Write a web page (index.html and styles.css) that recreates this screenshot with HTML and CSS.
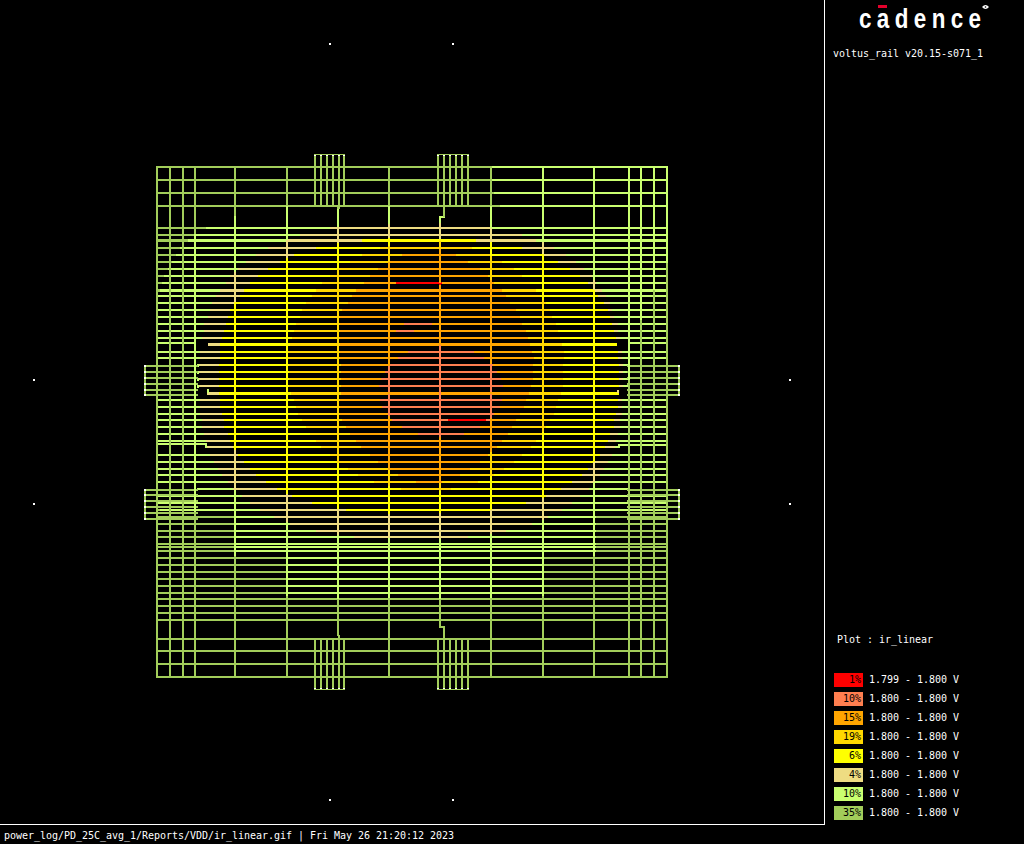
FILE: index.html
```html
<!DOCTYPE html>
<html lang="en">
<head>
    <meta charset="UTF-8">
    <meta name="viewport" content="width=device-width, initial-scale=1.0">
    <title>ir_linear</title>
    <link rel="stylesheet" href="styles.css">
</head>
<body>

<div class="left">
    <div class="plot">
        <svg id="grid" class="grid" width="824" height="824" viewBox="0 0 824 824" shape-rendering="crispEdges"></svg>
    </div>
    <div class="footer">power_log/PD_25C_avg_1/Reports/VDD/ir_linear.gif | Fri May 26 21:20:12 2023</div>
</div>

<div class="side">
    <div class="logo">
        <span class="logo-text">cadence</span>
        <span class="logo-bar"></span>
        <svg class="logo-eye" width="7" height="6" viewBox="0 0 7 6">
            <path d="M0 3 Q3.5 -1 7 3 Q3.5 7 0 3Z" fill="#fff"/>
            <circle cx="3.5" cy="3" r="0.8" fill="#000"/>
        </svg>
    </div>
    <div class="version">voltus_rail v20.15-s071_1</div>

    <div class="plot-name">Plot : ir_linear</div>
    <div class="legend">
        <div class="row"><span class="swatch c-red">1%</span>1.799 - 1.800 V</div>
        <div class="row"><span class="swatch c-coral">10%</span>1.800 - 1.800 V</div>
        <div class="row"><span class="swatch c-orange">15%</span>1.800 - 1.800 V</div>
        <div class="row"><span class="swatch c-gold">19%</span>1.800 - 1.800 V</div>
        <div class="row"><span class="swatch c-yellow">6%</span>1.800 - 1.800 V</div>
        <div class="row"><span class="swatch c-tan">4%</span>1.800 - 1.800 V</div>
        <div class="row"><span class="swatch c-lime">10%</span>1.800 - 1.800 V</div>
        <div class="row"><span class="swatch c-green">35%</span>1.800 - 1.800 V</div>
    </div>
</div>

<script src="plot.js"></script>

</body>
</html>
```

FILE: styles.css
```css
body {
    margin: 0;
    width: 1024px;
    height: 844px;
    display: flex;
    background-color: #000;
    color: #fff;
    font-family: 'DejaVu Sans Mono', monospace;
    font-size: 10px;
    letter-spacing: -0.02px;
    overflow: hidden;
}

.left {
    width: 825px;
    display: flex;
    flex-direction: column;
}

.plot {
    height: 824px;
    border-right: 1px solid #fff;
}

.grid {
    display: block;
}

.footer {
    border-top: 1px solid #fff;
    height: 19px;
    line-height: 21px;
    padding-left: 4px;
    white-space: pre;
}

.side {
    flex: 1;
    display: flex;
    flex-direction: column;
    padding-left: 8px;
}

.logo {
    position: relative;
    height: 48px;
}

.logo-text {
    position: absolute;
    left: 26px;
    top: 2px;
    font-family: 'Liberation Sans', sans-serif;
    font-size: 28px;
    line-height: 34px;
    font-weight: bold;
    letter-spacing: 6.75px;
    transform: scaleX(0.8);
    transform-origin: left top;
}

.logo-bar {
    position: absolute;
    left: 45px;
    top: 5px;
    width: 9px;
    height: 3px;
    background-color: #e4002b;
}

.logo-eye {
    position: absolute;
    left: 149px;
    top: 4px;
}

.version {
    line-height: 12px;
}

.plot-name {
    margin-top: auto;
    padding-left: 4px;
    line-height: 12px;
    margin-bottom: 24px;
}

.legend {
    padding-bottom: 22px;
}

.row {
    display: flex;
    align-items: center;
    height: 19px;
    white-space: pre;
}

.swatch {
    width: 27px;
    height: 14px;
    line-height: 14px;
    padding-right: 2px;
    margin-left: 1px;
    margin-right: 6px;
    text-align: right;
    color: #000;
}

.c-red { background-color: #ff0000; }
.c-coral { background-color: #ff7f50; }
.c-orange { background-color: #ffa500; }
.c-gold { background-color: #ffd700; }
.c-yellow { background-color: #ffff00; }
.c-tan { background-color: #eedc82; }
.c-lime { background-color: #caff70; }
.c-green { background-color: #a2cd5a; }
```

FILE: plot.js
```js
const RED = '#ff0000', CORAL = '#ff7f50', ORANGE = '#ffa500', GOLD = '#ffd700';
const YELLOW = '#ffff00', TAN = '#eedc82', LIME = '#caff70', GREEN = '#a2cd5a';

const svg = document.getElementById('grid');
let out = '';

function rect(x, y, w, h, color) {
    out += `<rect x="${x}" y="${y}" width="${w}" height="${h}" fill="${color}"/>`;
}

function inside(x, y, cx, cy, rx, ry, p) {
    return Math.pow(Math.abs(x - cx) / rx, p) + Math.pow(Math.abs(y - cy) / ry, p) < 1;
}

// lime patch, cut off by hand where the plot goes green
function isLime(x, y) {
    if (inside(x, y, 680, 170, 190, 115, 2)) return true;
    if (y < 206) return false;
    if (y > 510 && (x < 234 || x > 594)) return false;
    if (y > 555 && (x < 286 || x > 543)) return false;
    return inside(x, y, 420, 400, 268, 198, 4);
}

// voltage drop contours, rough shapes read off the plot
function heat(x, y) {
    if (y >= 282 && y <= 284 && x >= 396 && x <= 441) return RED;
    if (y >= 419 && y <= 422 && x >= 448 && x <= 484) return RED;
    if (y >= 323 && y <= 325 && x >= 403 && x <= 431) return CORAL;
    if (y >= 330 && y <= 332 && x >= 396 && x <= 412) return CORAL;
    if (y !== 343 && y !== 392 && inside(x, y, 440, 390, 62, 46, 2)) return CORAL;
    if (inside(x, y, 428, 365, 105, 118, 1.7)) return x < 340 ? GOLD : ORANGE;
    if (inside(x, y, 425, 365, 138, 125, 2)) return GOLD;
    if (inside(x, y, 418, 375, 200, 138, 2.6)) return YELLOW;
    if (inside(x, y, 410, 380, 212, 158, 2.6)) return TAN;
    if (isLime(x, y)) return LIME;
    return GREEN;
}

function hline(x1, x2, y, h) {
    let start = x1;
    let color = heat(x1, y);
    for (let x = x1; x < x2; x += 2) {
        const c = heat(x, y);
        if (c !== color) {
            rect(start, y, x - start, h, color);
            start = x;
            color = c;
        }
    }
    rect(start, y, x2 - start, h, color);
}

function vline(x, y1, y2) {
    let start = y1;
    let color = heat(x, y1);
    for (let y = y1; y < y2; y += 2) {
        const c = heat(x, y);
        if (c !== color) {
            rect(x, start, 2, y - start, color);
            start = y;
            color = c;
        }
    }
    rect(x, start, 2, y2 - start, color);
}

// horizontal straps
[166, 179, 192, 205, 638, 650, 663, 676].forEach(y => hline(156, 668, y, 2));

const full = [227, 234, 247, 254, 261, 268, 275, 282, 295, 302, 309, 316, 323, 330, 337, 351,
    357, 399, 406, 413, 419, 426, 433, 440, 454, 461, 468, 474, 481, 495, 502, 509, 516, 523,
    530, 536, 543, 546, 550, 557, 564, 571, 578, 585, 592, 598, 605, 612, 619];
full.forEach(y => hline(156, 668, y, 2));
hline(156, 668, 239, 3);
hline(156, 668, 289, 3);

hline(156, 196, 342, 2);
hline(628, 668, 342, 2);
hline(208, 617, 343, 3);
hline(207, 619, 392, 3);
rect(207, 389, 2, 4, LIME);
rect(617, 390, 2, 3, TAN);

[364, 371, 378, 385, 488].forEach(y => hline(197, 628, y, 2));
[364, 371, 378, 385].forEach(y => rect(197, y, 2, 3, LIME));

hline(156, 207, 443, 2);
rect(205, 443, 2, 5, LIME);
hline(205, 620, 446, 2);
hline(618, 668, 444, 2);

// left and right pads
[[365, 371, 377, 383, 389, 394], [489, 494, 500, 506, 512, 518]].forEach(rows => {
    rect(144, rows[0], 2, rows[5] - rows[0] + 2, GREEN);
    rect(678, rows[0], 2, rows[5] - rows[0] + 2, GREEN);
    rows.forEach(y => {
        rect(144, y, 54, 2, GREEN);
        rect(627, y, 53, 2, GREEN);
        rect(144, y, 2, 2, '#fff');
        rect(678, y, 2, 2, '#fff');
    });
});

// vertical straps, outer ones stay green
[156, 169, 182].forEach(x => rect(x, 166, 2, 512, GREEN));
[234, 286, 388, 490, 542, 593].forEach(x => vline(x, 166, 678));
vline(194, 166, 678);
rect(628, 166, 2, 512, GREEN);
rect(628, 166, 2, 214, LIME);
rect(640, 166, 2, 512, GREEN);
rect(640, 166, 2, 154, LIME);
rect(653, 166, 2, 512, GREEN);
rect(653, 166, 2, 124, LIME);
rect(666, 166, 2, 512, GREEN);
rect(666, 166, 2, 97, LIME);

vline(337, 209, 636);
rect(337, 206, 3, 3, GREEN);
rect(338, 635, 2, 4, GREEN);
vline(439, 217, 627);
rect(439, 216, 6, 2, LIME);
rect(443, 206, 2, 11, GREEN);
rect(439, 626, 6, 2, GREEN);
rect(443, 627, 2, 12, GREEN);

// top and bottom pads
[[314, 320, 326, 332, 338, 343], [437, 443, 449, 455, 461, 467]].forEach(cols => {
    cols.forEach(x => {
        rect(x, 154, 2, 52, GREEN);
        rect(x, 638, 2, 52, GREEN);
        rect(x, 154, 2, 2, '#fff');
        rect(x, 688, 2, 2, '#fff');
    });
    rect(cols[0], 154, cols[5] - cols[0] + 2, 1, GREEN);
    rect(cols[0], 689, cols[5] - cols[0] + 2, 1, GREEN);
});

// corner marks
[[330, 44], [453, 44], [330, 800], [453, 800], [34, 380], [34, 504], [790, 380], [790, 504]].forEach(p => {
    rect(p[0] - 1, p[1] - 1, 2, 2, '#fff');
});

svg.innerHTML = out;
```
